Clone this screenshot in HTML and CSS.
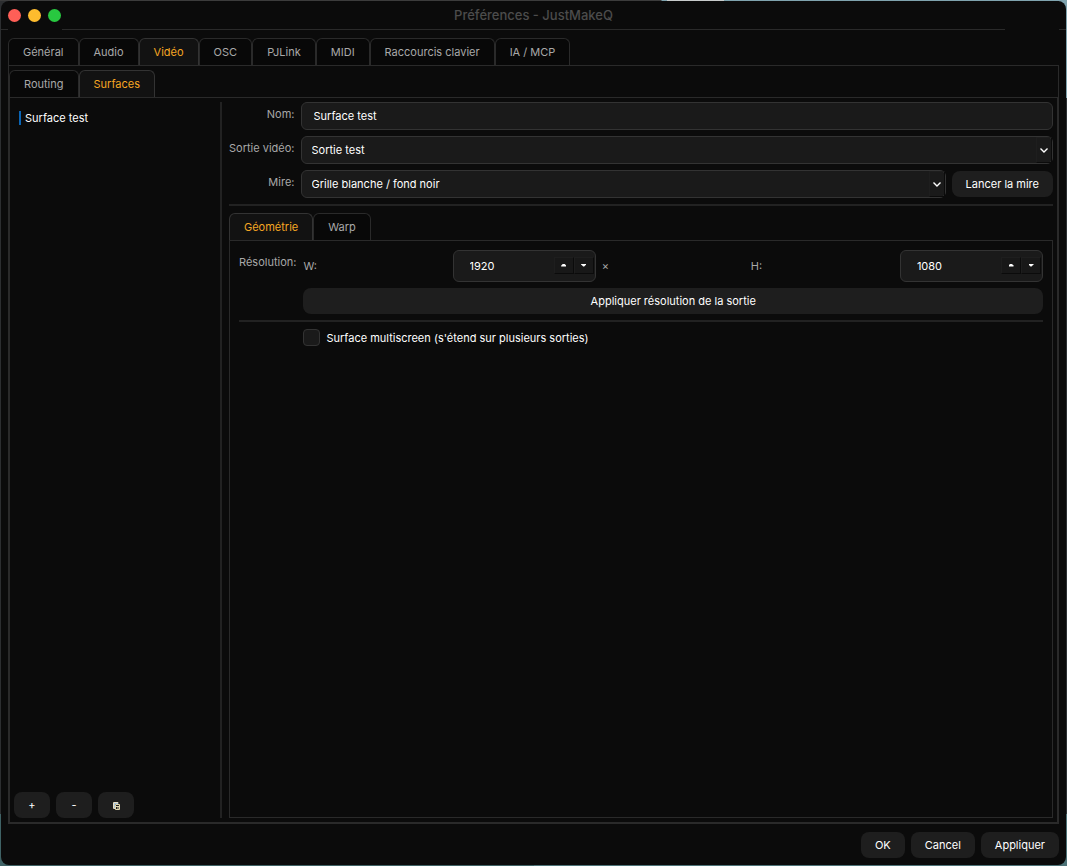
FILE: index.html
```html
<!DOCTYPE html>
<html lang="fr">
<head>
    <meta charset="UTF-8">
    <meta name="viewport" content="width=device-width, initial-scale=1.0">
    <title>Préférences - JustMakeQ</title>
    <link rel="stylesheet" href="styles.css">
</head>
<body>

<div class="window">
    <!-- Barre de titre -->
    <header class="titlebar">
        <div class="lights">
            <button class="light red" aria-label="Fermer"></button>
            <button class="light yellow" aria-label="Réduire"></button>
            <button class="light green" aria-label="Agrandir"></button>
        </div>
        <h1>Préférences - JustMakeQ</h1>
        <div class="lights-spacer"></div>
    </header>

    <main class="content">
        <nav class="tabs">
            <button class="tab">Général</button>
            <button class="tab">Audio</button>
            <button class="tab active">Vidéo</button>
            <button class="tab">OSC</button>
            <button class="tab">PJLink</button>
            <button class="tab">MIDI</button>
            <button class="tab">Raccourcis clavier</button>
            <button class="tab">IA / MCP</button>
        </nav>

        <section class="pane main-pane">
            <nav class="tabs">
                <button class="tab">Routing</button>
                <button class="tab active">Surfaces</button>
            </nav>

            <div class="pane surfaces">
                <!-- Liste des surfaces -->
                <aside class="sidebar">
                    <ul class="surface-list">
                        <li class="selected">Surface test</li>
                    </ul>
                    <div class="list-actions">
                        <button class="btn">+</button>
                        <button class="btn">-</button>
                        <button class="btn" aria-label="Dupliquer">
                            <svg width="7" height="8" viewBox="0 0 7 8" fill="none" stroke="#e8dfc4">
                                <path d="M5 1.5V.5H.5v6h2"/>
                                <path d="M2.5 2.5h4v5h-4zM3 4.5h3M4 6h2" stroke="#e0d6b0"/>
                                <path d="M1 1.5h4M1.5 2v4" stroke="#a9c4d8"/>
                            </svg>
                        </button>
                    </div>
                </aside>

                <!-- Détails de la surface -->
                <div class="details">
                    <form class="form">
                        <label for="nom">Nom:</label>
                        <input class="field" id="nom" type="text" value="Surface test">

                        <label for="sortie">Sortie vidéo:</label>
                        <div class="combo">
                            <select class="field" id="sortie"><option>Sortie test</option></select>
                            <span class="arrow"><svg width="8" height="5" viewBox="0 0 8 5"><path d="M.5.5L4 4 7.5.5"/></svg></span>
                        </div>

                        <label for="mire">Mire:</label>
                        <div class="mire-row">
                            <div class="combo">
                                <select class="field" id="mire"><option>Grille blanche / fond noir</option></select>
                                <span class="arrow"><svg width="8" height="5" viewBox="0 0 8 5"><path d="M.5.5L4 4 7.5.5"/></svg></span>
                            </div>
                            <button class="btn" type="button">Lancer la mire</button>
                        </div>
                    </form>

                    <hr>

                    <nav class="tabs geometry-tabs">
                        <button class="tab active">Géométrie</button>
                        <button class="tab">Warp</button>
                    </nav>
                    <section class="pane geometry">
                        <span class="resolution-label">Résolution:</span>
                        <div class="resolution">
                            <label for="largeur">W:</label>
                            <div class="spin">
                                <input id="largeur" type="number" value="1920">
                                <button class="step up" aria-label="Augmenter la largeur"></button>
                                <button class="step down" aria-label="Diminuer la largeur"></button>
                            </div>
                            <span>×</span>
                            <label for="hauteur">H:</label>
                            <div class="spin">
                                <input id="hauteur" type="number" value="1080">
                                <button class="step up" aria-label="Augmenter la hauteur"></button>
                                <button class="step down" aria-label="Diminuer la hauteur"></button>
                            </div>
                        </div>
                        <button class="btn apply">Appliquer résolution de la sortie</button>
                        <hr>
                        <label class="check">
                            <input type="checkbox">
                            Surface multiscreen (s'étend sur plusieurs sorties)
                        </label>
                    </section>
                </div>
            </div>
        </section>
    </main>

    <footer class="footer">
        <button class="btn">OK</button>
        <button class="btn">Cancel</button>
        <button class="btn">Appliquer</button>
    </footer>
</div>

</body>
</html>
```
FILE: styles.css
```css
* {
    box-sizing: border-box;
}
body {
    margin: 0;
    padding: 1px;
    min-height: 100vh;
    display: flex;
    background:
        linear-gradient(#3c3c3c, #3c3c3c) left top / 62% 1px no-repeat,
        linear-gradient(#c8cccc, #c8cccc) 66% top / 57px 1px no-repeat,
        linear-gradient(#7fa3ae 98px, #2c3134 98px, #2c3134 94%, #4d7378 94%) right top / 50% 100% no-repeat,
        linear-gradient(#2c2e30 94%, #3f6265 94%);
    font-family: Inter, "Liberation Sans", sans-serif;
    font-size: 11px;
    line-height: 14px;
    color: #fff;
}
button, input, select {
    font: inherit;
    color: inherit;
    margin: 0;
}
.window {
    flex: 1;
    display: flex;
    flex-direction: column;
    background-color: #0b0b0b;
    border-radius: 8px;
    overflow: hidden;
}

/* Barre de titre */
.titlebar {
    display: flex;
    justify-content: space-between;
    height: 29px;
    padding: 0 7px;
    background: linear-gradient(#2a2a2a, #2a2a2a) center bottom / 100% 1px no-repeat;
}
.titlebar h1 {
    margin: 0;
    font-size: 13px;
    font-weight: 500;
    line-height: 29px;
    color: #4c4c4c;
}
.lights, .lights-spacer {
    width: 54px;
    height: 29px;
    background-color: #0b0b0b;
}
.lights {
    display: flex;
    align-items: center;
    gap: 7px;
}
.light {
    width: 13px;
    height: 13px;
    padding: 0;
    border: none;
    border-radius: 50%;
}
.red {
    background-color: #ff5f57;
}
.yellow {
    background-color: #febc2e;
}
.green {
    background-color: #28c840;
}

/* Onglets */
.tabs {
    display: flex;
}
.tab {
    height: 27px;
    padding: 0 14px;
    border: 1px solid #2a2a2a;
    border-bottom: none;
    border-radius: 6px 6px 0 0;
    background-color: #080808;
    color: #a8a8a8;
}
.tab.active {
    background-color: #121212;
    border-color: #333;
    color: #f5a623;
}
.pane {
    flex: 1;
    border: 1px solid #2a2a2a;
}
.content {
    flex: 1;
    display: flex;
    flex-direction: column;
    padding: 8px 7px 0;
}
.main-pane {
    display: flex;
    flex-direction: column;
    padding-top: 4px;
}
.surfaces {
    display: flex;
    padding: 4px;
}

/* Liste de gauche */
.sidebar {
    display: flex;
    flex-direction: column;
    justify-content: space-between;
    width: 208px;
    border-right: 2px solid #222;
}
.surface-list {
    list-style: none;
    margin: 9px 5px;
    padding: 0;
}
.selected {
    padding-left: 4px;
    border-left: 2px solid #0a64b4;
}
.list-actions {
    display: flex;
    gap: 6px;
}
.btn {
    height: 26px;
    padding: 0 14px;
    border: none;
    border-radius: 8px;
    background-color: #1e1e1e;
}
.list-actions .btn {
    width: 36px;
}
.list-actions .btn svg {
    vertical-align: middle;
}

/* Formulaire */
.details {
    flex: 1;
    display: flex;
    flex-direction: column;
    padding-left: 7px;
}
hr {
    width: 100%;
    height: 2px;
    margin: 6px 0 7px;
    border: none;
    background-color: #222;
}
.form {
    display: grid;
    grid-template-columns: auto 1fr;
    gap: 6px;
}
.form > label {
    padding-top: 5px;
    text-align: right;
    color: #a8a8a8;
}
.field {
    width: 100%;
    height: 28px;
    padding: 0 12px;
    border: 1px solid #333;
    border-radius: 6px;
    background-color: #1a1a1a;
    outline: none;
}
.combo {
    position: relative;
    flex: 1;
}
select.field {
    display: block;
    padding: 0 10px;
    appearance: none;
}
.arrow {
    position: absolute;
    top: 1px;
    right: 1px;
    width: 16px;
    height: 26px;
    display: flex;
    align-items: center;
    justify-content: center;
    border: 1px solid #1e1e1e;
    border-right-color: #0b0b0b;
    border-bottom-color: #0b0b0b;
    pointer-events: none;
}
.arrow path {
    fill: none;
    stroke: #fff;
    stroke-width: 1.4;
}
.mire-row {
    display: flex;
    align-items: center;
    gap: 6px;
}

/* Géométrie */
.geometry {
    display: grid;
    grid-template-columns: auto 1fr;
    align-content: start;
    column-gap: 7px;
    padding: 9px;
}
.resolution-label {
    padding-top: 5px;
    color: #a8a8a8;
}
.resolution {
    display: grid;
    grid-template-columns: repeat(5, minmax(0, 1fr));
    align-items: center;
    gap: 6px;
    color: #a8a8a8;
}
.spin {
    display: flex;
    align-items: center;
    height: 32px;
    padding: 0 1px 0 16px;
    border: 1px solid #333;
    border-radius: 6px;
    background-color: #1a1a1a;
    color: #fff;
}
.spin input {
    flex: 1;
    min-width: 0;
    padding: 0;
    border: none;
    background: none;
    outline: none;
    appearance: textfield;
}
.step {
    display: flex;
    align-items: center;
    justify-content: center;
    width: 20px;
    height: 17px;
    margin-bottom: 2px;
    padding: 0;
    border: 1px solid #1e1e1e;
    border-right-color: #0b0b0b;
    border-bottom-color: #0b0b0b;
    background-color: #181818;
}
.step::before {
    content: "";
    width: 5px;
    height: 3px;
    background-color: #fff;
}
.up::before {
    clip-path: polygon(40% 0, 60% 0, 100% 70%, 100% 100%, 0 100%, 0 70%);
}
.down::before {
    clip-path: polygon(0 0, 100% 0, 100% 30%, 60% 100%, 40% 100%, 0 30%);
}
.apply, .check {
    grid-column: 2;
}
.apply {
    margin-top: 6px;
}
.geometry hr {
    grid-column: 1 / 3;
}
.check {
    display: flex;
    align-items: center;
    gap: 6px;
}
.check input {
    appearance: none;
    width: 17px;
    height: 17px;
    border: 1px solid #333;
    border-radius: 4px;
    background-color: #1a1a1a;
}

.footer {
    display: flex;
    justify-content: flex-end;
    gap: 6px;
    padding: 8px 7px 7px;
}
```
